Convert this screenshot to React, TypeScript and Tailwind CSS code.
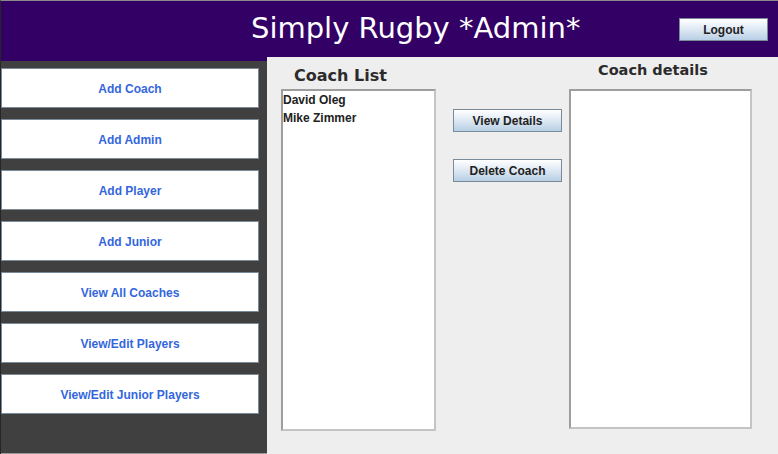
const menuItems = [
  "Add Coach",
  "Add Admin",
  "Add Player",
  "Add Junior",
  "View All Coaches",
  "View/Edit Players",
  "View/Edit Junior Players",
];

const coaches = ["David Oleg", "Mike Zimmer"];

function MetalButton({ label, className }: { label: string; className: string }) {
  return (
    <button
      className={`flex items-center justify-center border border-[#7a8a99] bg-gradient-to-b from-white via-[#dde8f3] to-[#b8cfe5] text-[12px] font-bold text-[#222222] ${className}`}
      style={{ fontFamily: '"Liberation Sans", Arial, sans-serif' }}
    >
      {label}
    </button>
  );
}

export default function App() {
  return (
    <div
      className="flex h-[454px] w-[778px] flex-col overflow-hidden border-l border-t border-l-[#262626] border-t-[#8a8a8a]"
      style={{ fontFamily: '"Liberation Sans", Arial, sans-serif' }}
    >
      {/* header */}
      <div className="flex h-[56px] shrink-0 items-center bg-[#330066]">
        <h1
          className="pb-[2px] pl-[250px] text-[29px] leading-none text-white"
          style={{ fontFamily: '"DejaVu Sans", sans-serif' }}
        >
          Simply Rugby *Admin*
        </h1>
        <MetalButton label="Logout" className="ml-auto mr-[10px] mt-[1px] h-[23px] w-[89px]" />
      </div>

      <div className="flex flex-1">
        {/* side menu */}
        <div className="flex w-[266px] shrink-0 flex-col gap-[11px] border-b border-t-4 border-b-[#9a9a9a] border-t-[#330066] bg-[#404040] pt-[7px]">
          {menuItems.map((item) => (
            <button
              key={item}
              className="flex h-[40px] w-[258px] items-center justify-center border border-[#7a8a99] bg-white pt-[2px] text-[12px] font-bold text-[#3366dd]"
            >
              {item}
            </button>
          ))}
        </div>

        {/* main area */}
        <div className="flex flex-1 bg-[#eeeeee] pl-[14px]">
          <div className="flex w-[155px] flex-col">
            <div
              className="h-[32px] pl-[13px] pt-[9px] text-[16px] font-bold leading-[20px] text-[#2b2b2b]"
              style={{ fontFamily: '"DejaVu Sans", sans-serif' }}
            >
              Coach List
            </div>
            <div className="h-[342px] border-2 border-[#c4c4c4] border-l-[#9e9e9e] border-t-[#9e9e9e] bg-white">
              {coaches.map((c) => (
                <div key={c} className="text-[12px] font-bold leading-[18px] text-[#222222]">
                  {c}
                </div>
              ))}
            </div>
          </div>

          <div className="ml-[17px] flex flex-col gap-[27px] pt-[52px]">
            <MetalButton label="View Details" className="h-[23px] w-[109px]" />
            <MetalButton label="Delete Coach" className="h-[23px] w-[109px]" />
          </div>

          <div className="ml-[7px] flex w-[183px] flex-col">
            <div
              className="h-[32px] pl-[29px] pt-[3px] text-[14.5px] font-bold leading-[20px] text-[#2b2b2b]"
              style={{ fontFamily: '"DejaVu Sans", sans-serif' }}
            >
              Coach details
            </div>
            <div className="h-[340px] border-2 border-[#c4c4c4] border-l-[#9e9e9e] border-t-[#9e9e9e] bg-white" />
          </div>
        </div>
      </div>
    </div>
  );
}
